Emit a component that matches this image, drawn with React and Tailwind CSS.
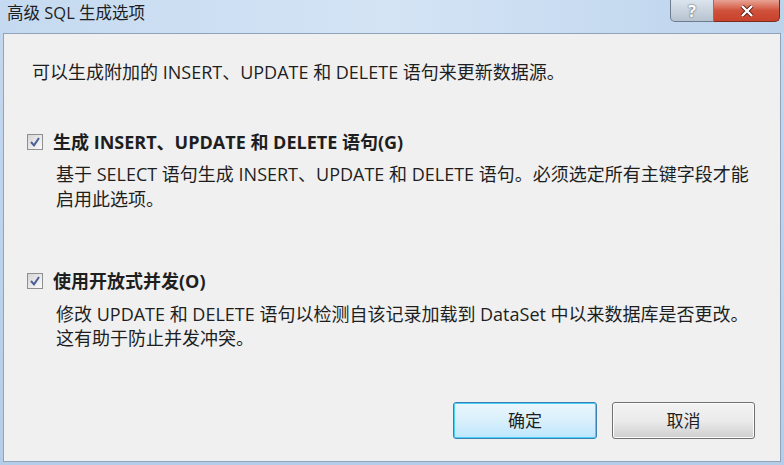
import React from "react";

const font = { fontFamily: '"Open Sans", "Noto Sans CJK SC", sans-serif' };

const Check = () => (
  <div className="w-[16px] h-[16px] border border-[#8e8f8f] bg-gradient-to-br from-[#d6d6d6] to-[#fbfbfb] flex items-center justify-center shrink-0">
    <svg width="12" height="12" viewBox="0 0 12 12">
      <path d="M2 6 L5 9.3 L10 2" fill="none" stroke="#4a5f97" strokeWidth="2" />
    </svg>
  </div>
);

export default function App() {
  return (
    <div className="w-[784px] h-[465px] bg-gradient-to-b from-[#c4d9ef] to-[#b5cde8] relative overflow-hidden" style={font}>
      {/* title bar */}
      <div className="h-[33px] flex items-start justify-between bg-gradient-to-r from-[#c5daf0] via-[#d4e4f5] to-[#bcd3ec]">
        <div className="pl-[7px] pt-[3px] text-[16.5px] text-[#1e1e1e] leading-[20px]">高级 SQL 生成选项</div>
        <div className="flex mr-[4px]">
          <div className="w-[44px] h-[22px] rounded-bl-[5px] border border-[#6d7c8e] border-t-0 bg-gradient-to-b from-[#dbe4ee] to-[#b7c3d0] flex items-center justify-center text-white font-bold text-[16px]" style={{ textShadow: "0 0 2px #333" }}>?</div>
          <div className="w-[66px] h-[22px] rounded-br-[5px] border border-[#7b2a20] border-t-0 border-l-0 bg-gradient-to-b from-[#e7a394] via-[#d0513c] to-[#c8412b] flex items-center justify-center">
            <svg width="14" height="12" viewBox="0 0 14 12">
              <path d="M2 1 L12 11 M12 1 L2 11" stroke="#5a1a12" strokeWidth="4" />
              <path d="M2 1 L12 11 M12 1 L2 11" stroke="#ffffff" strokeWidth="2.4" />
            </svg>
          </div>
        </div>
      </div>
      {/* client */}
      <div className="absolute left-[3px] top-[33px] w-[778px] h-[429px] bg-[#f0f0f0] border border-[#8fa3ba] text-[#1e1e1e] text-[18px]">
        <div className="pl-[28px] pt-[26px] leading-[24px]">可以生成附加的 INSERT、UPDATE 和 DELETE 语句来更新数据源。</div>
        <div className="pl-[23px] pt-[46px]">
          <div className="flex items-center gap-[10px] leading-[24px]">
            <Check />
            <span className="font-bold">生成 INSERT、UPDATE 和 DELETE 语句(G)</span>
          </div>
          <div className="pl-[29px] pt-[8px] leading-[25px]">
            基于 SELECT 语句生成 INSERT、UPDATE 和 DELETE 语句。必须选定所有主键字段才能<br />启用此选项。
          </div>
        </div>
        <div className="pl-[23px] pt-[57px]">
          <div className="flex items-center gap-[10px] leading-[24px]">
            <Check />
            <span className="font-bold">使用开放式并发(O)</span>
          </div>
          <div className="pl-[29px] pt-[9px] leading-[24px]">
            修改 UPDATE 和 DELETE 语句以检测自该记录加载到 DataSet 中以来数据库是否更改。<br />这有助于防止并发冲突。
          </div>
        </div>
        <div className="absolute left-[449px] top-[368px] flex gap-[15px]">
          <div className="w-[144px] h-[37px] rounded-[3px] border border-[#3c7fb1] bg-gradient-to-b from-[#eaf6fd] via-[#d9f0fc] to-[#bee6fd] flex items-center justify-center text-[17px] shadow-[inset_0_0_0_1px_#48d0f5]">确定</div>
          <div className="w-[143px] h-[37px] rounded-[3px] border border-[#707070] bg-gradient-to-b from-[#f2f2f2] via-[#ebebeb] to-[#cfcfcf] flex items-center justify-center text-[17px] shadow-[inset_0_0_0_1px_#fcfcfc]">取消</div>
        </div>
      </div>
    </div>
  );
}
